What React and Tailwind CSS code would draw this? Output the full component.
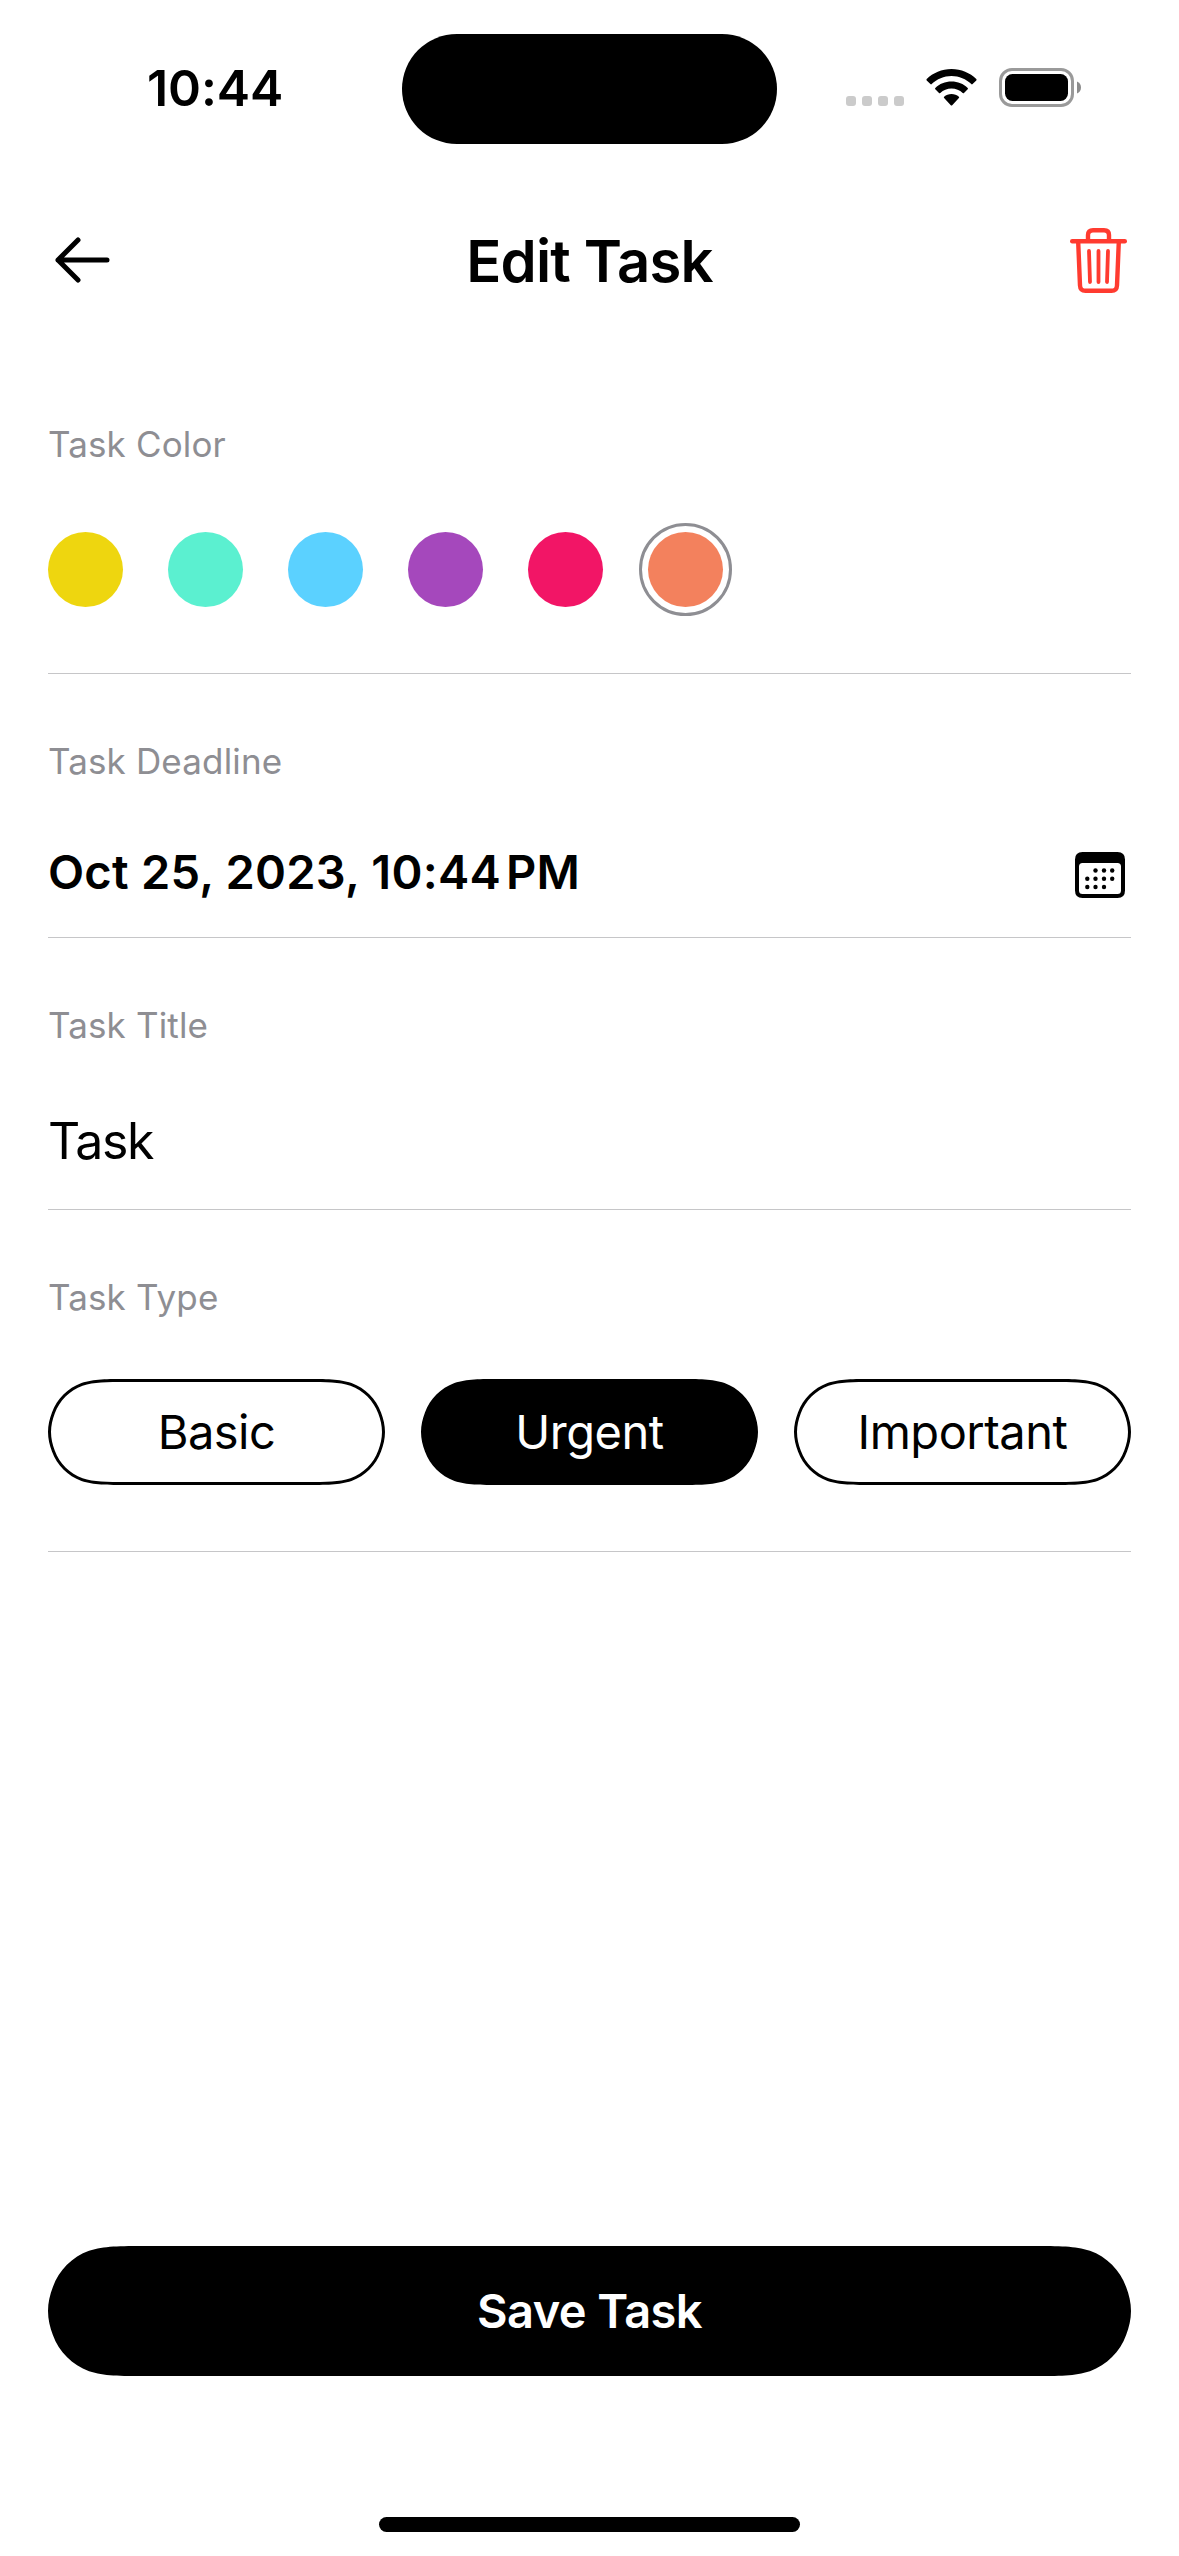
const swatches = [
  { name: "Yellow", color: "bg-[#eed60f]" },
  { name: "Mint", color: "bg-[#5bf0d0]" },
  { name: "Sky", color: "bg-[#5bd1ff]" },
  { name: "Purple", color: "bg-[#a548bc]" },
  { name: "Pink", color: "bg-[#f21566]" },
  { name: "Orange", color: "bg-[#f3815d]", selected: true },
];

const types = ["Basic", "Urgent", "Important"];

// Pill with continuous-curvature corners, as a CSS path() value.
function pill(w, h) {
  const r = h / 2;
  const [a, b, c, d, e, f, g] = [1.5287, 1.0885, 0.8684, 0.6315, 0.0749, 0.3728, 0.169].map((k) => k * r);
  const [p, q, s] = [0.03, 0.75, 0.87].map((k) => k * r);
  return `path("M${a} 0H${w - a}C${w - b} 0 ${w - c} 0 ${w - d} ${e}C${w - f} ${g} ${w - g} ${f} ${w - e} ${d}C${w - p} ${q} ${w} ${s} ${w} ${r}C${w} ${h - s} ${w - p} ${h - q} ${w - e} ${h - d}C${w - g} ${h - f} ${w - f} ${h - g} ${w - d} ${h - e}C${w - c} ${h} ${w - b} ${h} ${w - a} ${h}H${a}C${b} ${h} ${c} ${h} ${d} ${h - e}C${f} ${h - g} ${g} ${h - f} ${e} ${h - d}C${p} ${h - q} 0 ${h - s} 0 ${r}C0 ${s} ${p} ${q} ${e} ${d}C${g} ${f} ${f} ${g} ${d} ${e}C${c} 0 ${b} 0 ${a} 0Z")`;
}

function StatusBar() {
  return (
    <div className="flex h-[144px] w-full items-start pt-[34px]">
      <div className="flex h-[110px] w-[402px] items-center pb-[2px] pl-[147px]">
        <span className="text-[50px] leading-none font-semibold tracking-[-0.1px]">10:44</span>
      </div>
      <div className="h-[110px] w-[375px] rounded-full bg-black" />
      <div className="flex h-[110px] flex-1 items-start pt-[34px] pl-[69px]">
        <div className="mt-[28px] flex gap-[6px]">
          {[0, 1, 2, 3].map((i) => (
            <span key={i} className="size-[10px] rounded-[3px] bg-[#cbcbcb]" />
          ))}
        </div>
        <svg className="mt-[1px] ml-[22px]" width="51" height="37" viewBox="0 0 51 37">
          <path d="M25.5 0C35.2 0 44 3.8 50.3 10.1C50.7 10.5 50.7 11 50.3 11.4L46.6 15.1C46.2 15.5 45.7 15.5 45.3 15.1C40.1 10.1 33.1 7.1 25.5 7.1C17.9 7.1 10.9 10.1 5.7 15.1C5.3 15.5 4.8 15.5 4.4 15.1L.7 11.4C.3 11 .3 10.5 .7 10.1C7 3.8 15.8 0 25.5 0Z" />
          <path d="M25.5 12.5C31.8 12.5 37.5 14.9 41.7 18.9C42.1 19.3 42.1 19.8 41.7 20.2L38 23.9C37.6 24.3 37.1 24.3 36.7 23.9C33.7 21.2 29.8 19.6 25.5 19.6C21.2 19.6 17.3 21.2 14.3 23.9C13.9 24.3 13.4 24.3 13 23.9L9.3 20.2C8.9 19.8 8.9 19.3 9.3 18.9C13.5 14.9 19.2 12.5 25.5 12.5Z" />
          <path d="M25.5 25.1C28.3 25.1 30.9 26.1 32.9 27.8C33.3 28.2 33.3 28.7 32.9 29.1L26.2 36.2C25.8 36.7 25.2 36.7 24.8 36.2L18.1 29.1C17.7 28.7 17.7 28.2 18.1 27.8C20.1 26.1 22.7 25.1 25.5 25.1Z" />
        </svg>
        <svg className="ml-[22px]" width="84" height="39" viewBox="0 0 84 39">
          <rect x="1.5" y="1.5" width="72" height="36" rx="11.5" fill="none" stroke="#9a9a9a" strokeWidth="3" />
          <rect x="6" y="6" width="63" height="27" rx="7.5" />
          <path d="M78 13.5C80.5 14.5 82 16.8 82 19.5S80.5 24.500 78 25.500Z" fill="#8c8c8c" />
        </svg>
      </div>
    </div>
  );
}

function Header() {
  return (
    <header className="mt-[72px] flex h-[90px] items-center justify-between px-[48px]">
      <button aria-label="Back" className="flex w-[90px] justify-start pb-[2px] pl-[6px]">
        <svg width="57" height="46" viewBox="0 0 57 46" fill="none" stroke="black" strokeWidth="5" strokeLinecap="round" strokeLinejoin="round">
          <path d="M24 3L4 23L24 43M4 23H53" />
        </svg>
      </button>
      <h1 className="text-[58px] leading-none font-semibold tracking-[-0.8px]">Edit Task</h1>
      <button aria-label="Delete" className="flex w-[90px] justify-end pr-[4px] pb-[2px]">
        <svg width="57" height="65" viewBox="0 0 57 65" fill="none" stroke="#ff3b30" strokeLinecap="round" strokeLinejoin="round">
          <path d="M2.2 13.3H54.800" strokeWidth="4.400" />
          <path d="M18 13V7Q18 2.200 23 2.200H34Q39 2.200 39 7V13" strokeWidth="4.400" strokeLinecap="butt" />
          <path d="M8.200 14L10 57.500Q10.200 62.800 15.500 62.800H41.500Q46.800 62.800 47 57.500L48.800 14" strokeWidth="4.400" />
          <path d="M19 23L20 54M28.500 23V54M38 23L37 54" strokeWidth="3.800" />
        </svg>
      </button>
    </header>
  );
}

function Label({ children }) {
  return <div className="text-[35px] leading-[42px] tracking-[0.15px] text-[#8e8e93]">{children}</div>;
}

function CalendarIcon() {
  const dots = [
    [20.5, 18.5], [29, 18.5], [37.2, 18.5],
    [12.3, 26.7], [20.5, 26.7], [29, 26.7], [37.2, 26.7],
    [12.3, 35], [20.5, 35], [29, 35],
  ];
  return (
    <svg className="mt-[6px]" width="50" height="46" viewBox="0 0 50 46">
      <path fillRule="evenodd" d="M7.500 0H42.500Q50 0 50 7.500V38.500Q50 46 42.500 46H7.500Q0 46 0 38.500V7.500Q0 0 7.500 0ZM7.500 11Q4 11 4 14.500V38.500Q4 42 7.500 42H42.500Q46 42 46 38.500V14.500Q46 11 42.500 11Z" />
      {dots.map(([x, y]) => (
        <circle key={`${x}-${y}`} cx={x} cy={y} r="2.200" />
      ))}
    </svg>
  );
}

function TypeButton({ label, selected }) {
  return (
    <button className="flex h-[106px] bg-black p-[3px]" style={{ clipPath: pill(337, 106) }}>
      <span
        className={`flex h-[100px] w-[331px] items-center justify-center text-[47px] tracking-[-0.5px] ${selected ? "bg-black text-white" : "bg-white text-black"}`}
        style={{ clipPath: pill(331, 100) }}
      >
        {label}
      </span>
    </button>
  );
}

export default function App() {
  return (
    <div className="flex h-[2556px] w-[1179px] flex-col bg-white font-['Inter',sans-serif] text-black">
      <StatusBar />
      <Header />
      <main className="flex flex-1 flex-col px-[48px]">
        <section className="flex h-[368px] flex-col border-b border-[#c6c6c8] pt-[117px]">
          <Label>Task Color</Label>
          <div className="mt-[67px] flex gap-[45px]">
            {swatches.map((s) => (
              <button
                key={s.name}
                aria-label={s.name}
                className={`size-[75px] rounded-full ${s.color} ${s.selected ? "outline-[3px] outline-offset-[6px] outline-[#8e8e93]" : ""}`}
              />
            ))}
          </div>
        </section>

        <section className="flex h-[264px] flex-col border-b border-[#c6c6c8] pt-[66px]">
          <Label>Task Deadline</Label>
          <div className="mt-[60px] flex h-[60px] items-center justify-between pr-[6px]">
            <span className="text-[47px] leading-[60px] font-semibold tracking-[0.25px]">
              Oct 25, 2023, 10:44<span className="ml-[5px]">PM</span>
            </span>
            <CalendarIcon />
          </div>
        </section>

        <section className="flex h-[272px] flex-col border-b border-[#c6c6c8] pt-[66px]">
          <Label>Task Title</Label>
          <div className="mt-[65px] text-[50px] leading-[60px] tracking-[-1.4px]">Task</div>
        </section>

        <section className="flex h-[342px] flex-col border-b border-[#c6c6c8] pt-[66px]">
          <Label>Task Type</Label>
          <div className="mt-[61px] grid grid-cols-3 gap-[36px]">
            {types.map((t) => (
              <TypeButton key={t} label={t} selected={t === "Urgent"} />
            ))}
          </div>
        </section>

        <button
          className="mt-auto mb-[141px] flex h-[130px] items-center justify-center bg-black text-[47px] font-semibold tracking-[-0.6px] text-white"
          style={{ clipPath: pill(1083, 130) }}
        >
          Save Task
        </button>
      </main>
      <div className="mb-[24px] h-[15px] w-[421px] self-center rounded-full bg-black" />
    </div>
  );
}
